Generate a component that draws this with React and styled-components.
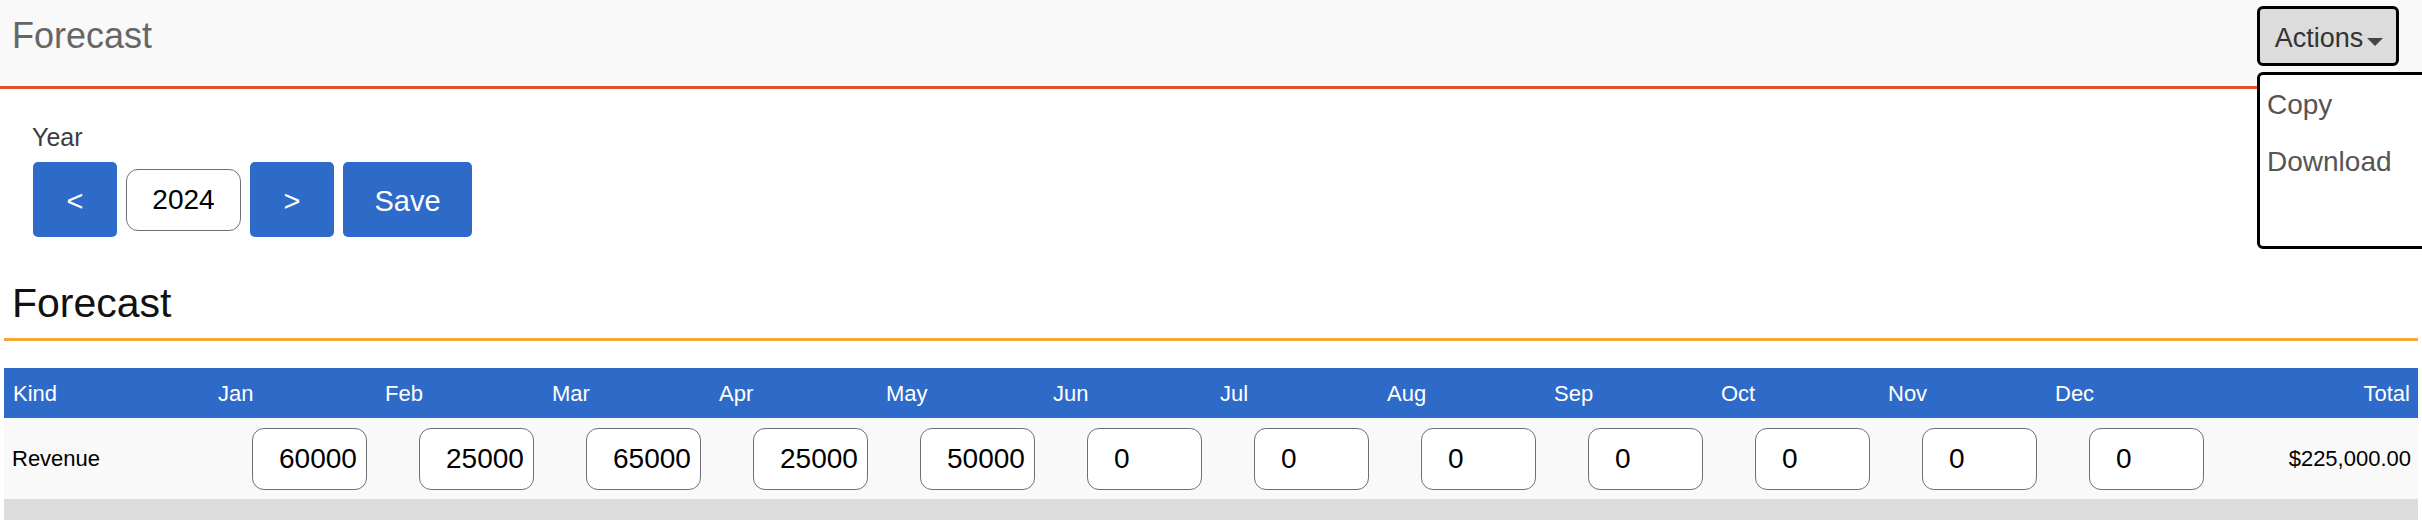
import { useState } from "react";
import styled, { createGlobalStyle } from "styled-components";

const MONTHS = ["Jan", "Feb", "Mar", "Apr", "May", "Jun", "Jul", "Aug", "Sep", "Oct", "Nov", "Dec"];
const REVENUE = [60000, 25000, 65000, 25000, 50000, 0, 0, 0, 0, 0, 0, 0];

const GlobalStyle = createGlobalStyle`
  html, body {
    margin: 0;
    padding: 0;
    overflow: hidden;
    background: #ffffff;
    font-family: "Liberation Sans", Arial, sans-serif;
  }
  * {
    box-sizing: border-box;
  }
`;

export default function App() {
  const [year, setYear] = useState(2024);
  const [values, setValues] = useState(REVENUE);
  const total = values.reduce((sum, v) => sum + Number(v || 0), 0);

  return (
    <>
      <GlobalStyle />
      <Header>
        <Title>Forecast</Title>
        <Actions>
          <ActionsButton>
            Actions
            <Caret />
          </ActionsButton>
          <Menu>
            <MenuItem>Copy</MenuItem>
            <MenuItem>Download</MenuItem>
          </Menu>
        </Actions>
      </Header>

      <YearSection>
        <Label>Year</Label>
        <Controls>
          <BlueButton onClick={() => setYear(year - 1)}>&lt;</BlueButton>
          <YearInput value={year} onChange={(e) => setYear(e.target.value)} />
          <BlueButton onClick={() => setYear(year + 1)}>&gt;</BlueButton>
          <BlueButton $wide>Save</BlueButton>
        </Controls>
      </YearSection>

      <Main>
        <Heading>Forecast</Heading>
        <Grid>
          <HeadCell>Kind</HeadCell>
          {MONTHS.map((m) => (
            <HeadCell key={m}>{m}</HeadCell>
          ))}
          <HeadCell $right>Total</HeadCell>

          <BodyCell>Revenue</BodyCell>
          {values.map((v, i) => (
            <BodyCell key={MONTHS[i]} $input>
              <MonthInput
                value={v}
                onChange={(e) => {
                  const next = [...values];
                  next[i] = e.target.value;
                  setValues(next);
                }}
              />
            </BodyCell>
          ))}
          <BodyCell $right>
            ${total.toLocaleString("en-US", { minimumFractionDigits: 2 })}
          </BodyCell>
        </Grid>
        <Band />
      </Main>
    </>
  );
}

const Header = styled.header`
  height: 89px;
  background-color: #f9f9f9;
  border-bottom: 3px solid #e5522f;
  display: flex;
  justify-content: space-between;
  align-items: center;
  padding: 6px 23px 20px 12px;
`;

const Title = styled.h1`
  margin: 0;
  font-size: 36px;
  font-weight: 400;
  color: #666666;
`;

const Actions = styled.div`
  position: relative;
`;

const ActionsButton = styled.button`
  width: 142px;
  height: 60px;
  display: flex;
  align-items: center;
  justify-content: center;
  gap: 4px;
  background-color: #dcdcdc;
  border: 3px solid #000000;
  border-radius: 6px;
  font-family: "Liberation Sans", Arial, sans-serif;
  font-size: 27px;
  color: #333333;
  padding: 5px 0 0 2px;
`;

const Caret = styled.span`
  width: 0;
  height: 0;
  margin-top: 6px;
  border-left: 8px solid transparent;
  border-right: 8px solid transparent;
  border-top: 8px solid #444444;
`;

const Menu = styled.div`
  position: absolute;
  top: calc(100% + 6px);
  left: 0;
  width: 200px;
  height: 177px;
  background-color: #ffffff;
  border: 3px solid #000000;
  border-radius: 6px;
  padding: 13px 0 0 7px;
  display: flex;
  flex-direction: column;
  gap: 24px;
  z-index: 2;
`;

const MenuItem = styled.div`
  font-size: 28px;
  line-height: 33px;
  color: #555555;
`;

const YearSection = styled.section`
  padding: 32px 0 0 32px;
  display: flex;
  flex-direction: column;
  gap: 9px;
`;

const Label = styled.label`
  font-size: 25px;
  line-height: 32px;
  color: #3c3c44;
`;

const Controls = styled.div`
  display: flex;
  align-items: center;
  gap: 9px;
  padding-left: 1px;
`;

const BlueButton = styled.button`
  width: ${(props) => (props.$wide ? "129px" : "84px")};
  height: 75px;
  background-color: #2e6ac7;
  border: none;
  border-radius: 5px;
  color: #ffffff;
  font-family: "Liberation Sans", Arial, sans-serif;
  font-size: 29px;
  padding: 0;
  padding-top: 4px;
`;

const YearInput = styled.input`
  width: 115px;
  height: 62px;
  border: 1px solid #6f6f76;
  border-radius: 12px;
  background: #ffffff;
  font-family: "Liberation Sans", Arial, sans-serif;
  font-size: 28px;
  color: #000000;
  text-align: center;
  padding: 0;
`;

const Main = styled.main`
  padding: 0 4px;
`;

const Heading = styled.h2`
  margin: 42px 0 27px;
  padding: 0 0 10px 8px;
  font-size: 41px;
  line-height: 49px;
  font-weight: 400;
  color: #111111;
  border-bottom: 3px solid #f2a73b;
`;

const Grid = styled.div`
  display: grid;
  grid-template-columns: 205px repeat(12, 167px) 1fr;
  grid-template-rows: 50px 81px;
`;

const HeadCell = styled.div`
  background-color: #2e6ac7;
  color: #ffffff;
  font-size: 22px;
  display: flex;
  align-items: center;
  justify-content: ${(props) => (props.$right ? "flex-end" : "flex-start")};
  padding: 2px 8px 0 9px;
`;

const BodyCell = styled.div`
  background-color: #f9f9f9;
  color: #000000;
  font-size: 22px;
  display: flex;
  align-items: center;
  justify-content: ${(props) => (props.$right ? "flex-end" : "flex-start")};
  padding: ${(props) => (props.$input ? "0 0 0 43px" : "0 7px 0 8px")};
`;

const MonthInput = styled.input`
  width: 115px;
  height: 62px;
  border: 1px solid #6f6f76;
  border-radius: 12px;
  background: #ffffff;
  font-family: "Liberation Sans", Arial, sans-serif;
  font-size: 28px;
  color: #000000;
  padding: 0 0 0 26px;
`;

const Band = styled.div`
  height: 21px;
  background-color: #dcdcdc;
`;
